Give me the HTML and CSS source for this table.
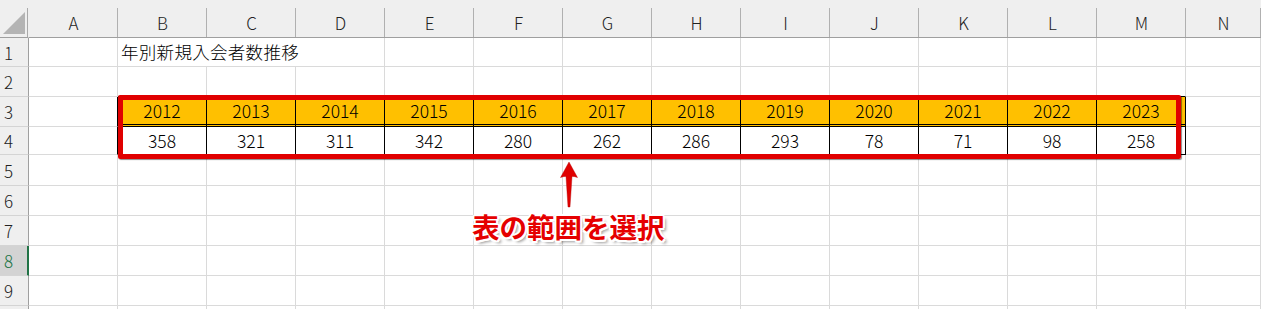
FILE: index.html
```html
<!DOCTYPE html>
<html lang="ja">
<head>
<meta charset="utf-8">
<title>年別新規入会者数推移</title>
<link rel="stylesheet" href="styles.css">
</head>
<body>
<div class="sheet">
  <div class="corner"><span class="tri"></span></div>
  <div class="ch">A</div><div class="ch">B</div><div class="ch">C</div><div class="ch">D</div><div class="ch">E</div><div class="ch">F</div><div class="ch">G</div><div class="ch">H</div><div class="ch">I</div><div class="ch">J</div><div class="ch">K</div><div class="ch">L</div><div class="ch">M</div><div class="ch">N</div>

  <div class="rh">1</div>
  <div class="c"></div><div class="c title">年別新規入会者数推移</div><div class="c"></div><div class="c"></div><div class="c"></div><div class="c"></div><div class="c"></div><div class="c"></div><div class="c"></div><div class="c"></div><div class="c"></div><div class="c"></div>

  <div class="rh">2</div>
  <div class="c"></div><div class="c tt"></div><div class="c tt"></div><div class="c tt"></div><div class="c tt"></div><div class="c tt"></div><div class="c tt"></div><div class="c tt"></div><div class="c tt"></div><div class="c tt"></div><div class="c tt"></div><div class="c tt"></div><div class="c tt"></div><div class="c"></div>

  <div class="rh">3</div>
  <div class="c tl"></div>
  <div class="c h">2012</div><div class="c h">2013</div><div class="c h">2014</div><div class="c h">2015</div><div class="c h">2016</div><div class="c h">2017</div><div class="c h">2018</div><div class="c h">2019</div><div class="c h">2020</div><div class="c h">2021</div><div class="c h">2022</div><div class="c h">2023</div>
  <div class="c"></div>

  <div class="rh">4</div>
  <div class="c tl"></div>
  <div class="c v">358</div><div class="c v">321</div><div class="c v">311</div><div class="c v">342</div><div class="c v">280</div><div class="c v">262</div><div class="c v">286</div><div class="c v">293</div><div class="c v">78</div><div class="c v">71</div><div class="c v">98</div><div class="c v">258</div>
  <div class="c"></div>

  <div class="rh">5</div>
  <div class="c"></div><div class="c"></div><div class="c"></div><div class="c"></div><div class="c"></div><div class="c"></div><div class="c"></div><div class="c"></div><div class="c"></div><div class="c"></div><div class="c"></div><div class="c"></div><div class="c"></div><div class="c"></div>

  <div class="rh">6</div>
  <div class="c"></div><div class="c"></div><div class="c"></div><div class="c"></div><div class="c"></div><div class="c"></div><div class="c"></div><div class="c"></div><div class="c"></div><div class="c"></div><div class="c"></div><div class="c"></div><div class="c"></div><div class="c"></div>

  <div class="rh">7</div>
  <div class="c"></div><div class="c"></div><div class="c"></div><div class="c"></div><div class="c"></div><div class="c"></div><div class="c"></div><div class="c"></div><div class="c"></div><div class="c"></div><div class="c"></div><div class="c"></div><div class="c"></div><div class="c"></div>

  <div class="rh sel">8</div>
  <div class="c"></div><div class="c"></div><div class="c"></div><div class="c"></div><div class="c"></div><div class="c"></div><div class="c"></div><div class="c"></div><div class="c"></div><div class="c"></div><div class="c"></div><div class="c"></div><div class="c"></div><div class="c"></div>

  <div class="rh">9</div>
  <div class="c"></div><div class="c"></div><div class="c"></div><div class="c"></div><div class="c"></div><div class="c"></div><div class="c"></div><div class="c"></div><div class="c"></div><div class="c"></div><div class="c"></div><div class="c"></div><div class="c"></div><div class="c"></div>

  <div class="rh"></div>
  <div class="c"></div><div class="c"></div><div class="c"></div><div class="c"></div><div class="c"></div><div class="c"></div><div class="c"></div><div class="c"></div><div class="c"></div><div class="c"></div><div class="c"></div><div class="c"></div><div class="c"></div><div class="c"></div>

  <div class="selbox"></div>
  <svg class="arrow" width="24" height="50" viewBox="0 0 24 50">
    <path d="M10 1 L18.5 16.5 Q15 15.2 13 15.5 L11 46 L9 46 L7 15.5 Q5 15.2 1.5 16.5 Z" fill="#e00000" stroke="#b00000" stroke-width="0.4"/>
  </svg>
  <div class="note">表の範囲を選択</div>
</div>
</body>
</html>
```

FILE: styles.css
```css
* { box-sizing: border-box; }

html, body {
  margin: 0;
  padding: 0;
  background: #ffffff;
}

.sheet {
  position: relative;
  display: grid;
  grid-template-columns: 29px repeat(13, 89px) 1fr;
  grid-template-rows: 38px 29px 30px 30px 28px 31px 30px 30px 30px 30px 30px;
  width: 1261px;
  height: 309px;
  overflow: hidden;
  font-family: "Noto Sans CJK JP", "Noto Sans", sans-serif;
  font-size: 17.5px;
  font-weight: 300;
  color: #000;
}

.corner {
  background: #efefef;
  border-bottom: 1px solid #9f9f9f;
  border-right: 1px solid #efefef;
  background-image: linear-gradient(#a9a9a9, #a9a9a9);
  background-size: 1px 29px;
  background-position: right bottom;
  background-repeat: no-repeat;
  display: flex;
  align-items: flex-end;
  padding: 0 0 3px 3px;
}

.tri {
  display: block;
  width: 22px;
  height: 22px;
  background: #b4b4b4;
  clip-path: polygon(100% 0, 100% 100%, 0 100%);
}

.ch {
  background-color: #efefef;
  background-image: linear-gradient(#b0b0b0, #b0b0b0);
  background-size: 1px 29px;
  background-position: right bottom;
  background-repeat: no-repeat;
  border-bottom: 1px solid #9f9f9f;
  display: flex;
  align-items: center;
  justify-content: center;
  padding-top: 8px;
  font-size: 17px;
  color: #222;
  line-height: 1;
}

.rh {
  background: #efefef;
  border-right: 1px solid #9f9f9f;
  border-bottom: 1px solid #d4d4d4;
  display: flex;
  align-items: center;
  padding-left: 4px;
  font-size: 17px;
  color: #222;
  line-height: 1;
}

.rh.sel {
  background: #d3d3d3;
  color: #217346;
  border-right: 2px solid #217346;
}

.c {
  border-right: 1px solid #dadada;
  border-bottom: 1px solid #dadada;
  display: flex;
  align-items: center;
  justify-content: center;
  line-height: 1;
  white-space: nowrap;
}

.c.title {
  grid-column: span 3;
  justify-content: flex-start;
  padding-left: 3px;
  letter-spacing: 0.3px;
}

.c.tt { border-bottom-color: #000; }
.c.tl { border-right-color: #000; }

.c.h {
  background: #ffc000;
  border-right: 1px solid #000;
  border-bottom: 3px double #000;
  padding-top: 1px;
}

.c.v {
  border-right: 1px solid #000;
  border-bottom: 1px solid #000;
}

.selbox {
  position: absolute;
  left: 118px;
  top: 95px;
  width: 1063px;
  height: 64px;
  border: 5px solid #e00000;
  border-radius: 2px;
  box-shadow: 1px 1px 1px rgba(0, 0, 0, 0.45);
}

.arrow {
  position: absolute;
  left: 559px;
  top: 161px;
}

.note {
  position: absolute;
  left: 472px;
  top: 213px;
  font-size: 27.5px;
  font-weight: 700;
  line-height: 1;
  color: #e50000;
  white-space: nowrap;
  text-shadow:
    2px 0 0 #fff, -2px 0 0 #fff, 0 2px 0 #fff, 0 -2px 0 #fff,
    1.5px 1.5px 0 #fff, -1.5px -1.5px 0 #fff, 1.5px -1.5px 0 #fff, -1.5px 1.5px 0 #fff,
    3px 3px 3px rgba(0, 0, 0, 0.4);
}
```
